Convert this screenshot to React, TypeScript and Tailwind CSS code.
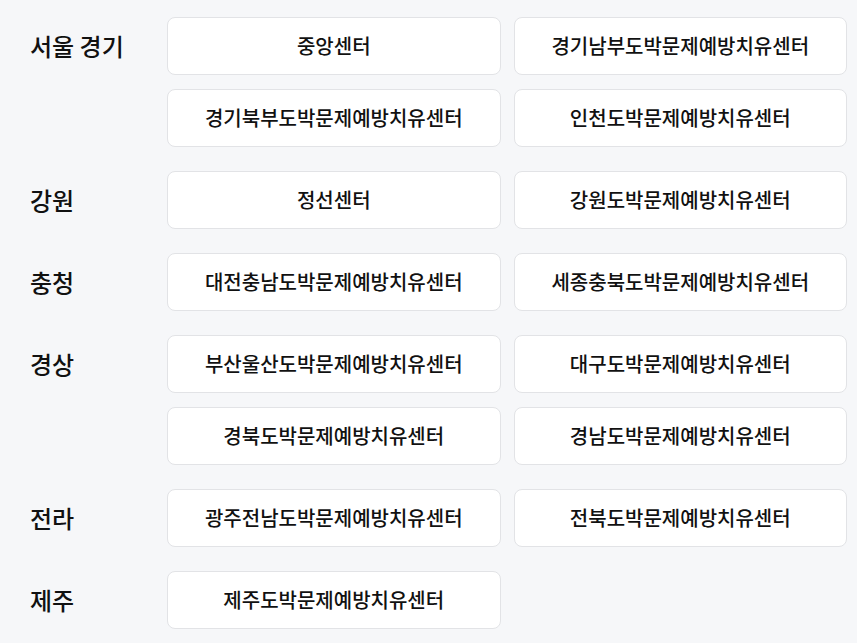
const groups: { region: string; centers: string[] }[] = [
  {
    region: "서울 경기",
    centers: ["중앙센터", "경기남부도박문제예방치유센터", "경기북부도박문제예방치유센터", "인천도박문제예방치유센터"],
  },
  { region: "강원", centers: ["정선센터", "강원도박문제예방치유센터"] },
  { region: "충청", centers: ["대전충남도박문제예방치유센터", "세종충북도박문제예방치유센터"] },
  {
    region: "경상",
    centers: ["부산울산도박문제예방치유센터", "대구도박문제예방치유센터", "경북도박문제예방치유센터", "경남도박문제예방치유센터"],
  },
  { region: "전라", centers: ["광주전남도박문제예방치유센터", "전북도박문제예방치유센터"] },
  { region: "제주", centers: ["제주도박문제예방치유센터"] },
];

export default function App() {
  return (
    <div
      className="min-h-screen bg-[#f6f7f9] pl-[30px] pr-[10px] pt-[17px] text-[#111]"
      style={{ fontFamily: '"Noto Sans CJK KR", "Noto Sans", sans-serif' }}
    >
      <div className="flex flex-col gap-[24px]">
        {groups.map((g) => (
          <div key={g.region} className="flex">
            <div className="w-[137px] shrink-0 h-[58px] flex items-center text-[24px] font-medium">
              {g.region}
            </div>
            <div className="grid flex-1 grid-cols-2 gap-x-[13px] gap-y-[14px]">
              {g.centers.map((c) => (
                <button
                  key={c}
                  className="h-[58px] rounded-lg border border-[#e2e3e6] bg-white text-[20px] font-medium text-[#111]"
                >
                  {c}
                </button>
              ))}
            </div>
          </div>
        ))}
      </div>
    </div>
  );
}
